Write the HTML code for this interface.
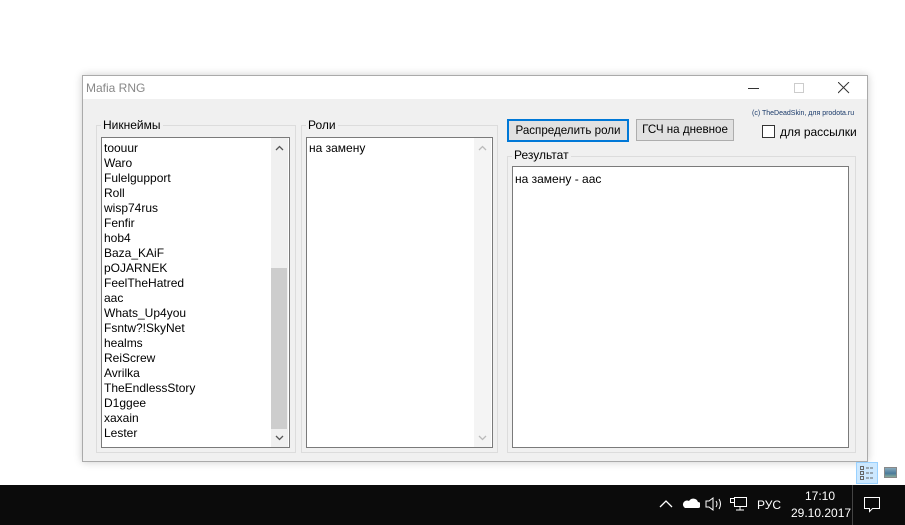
<!DOCTYPE html>
<html><head><meta charset="utf-8"><style>
*{margin:0;padding:0;box-sizing:border-box}
body{width:905px;height:525px;background:#fff;position:relative;overflow:hidden;font-family:"Liberation Sans","DejaVu Sans",sans-serif;font-size:12px;color:#000}
.a{position:absolute}
.win{left:82px;top:75px;width:786px;height:387px;background:#f0f0f0;border:1px solid #aaa;box-shadow:0 0 8px rgba(0,0,0,.2)}
.title{left:0;top:0;width:784px;height:23px;background:#fff}
.gb{border:1px solid #dcdcdc}
.lab{background:#f0f0f0;padding:0 2px;font-size:12px;line-height:13px}
.box{background:#fff;border:1px solid #7a7a7a}
.list div{height:15px;line-height:15px;padding-left:2px}
.btn{background:#e1e1e1;border:1px solid #adadad;text-align:center;line-height:19px;font-size:11.6px}
</style></head><body>
<div class="a win">
 <div class="a title"><span class="a" style="left:3px;top:5px;color:#888;font-size:12px">Mafia RNG</span>
  <div class="a" style="left:665px;top:12px;width:11px;height:1px;background:#333"></div>
  <div class="a" style="left:711px;top:7px;width:10px;height:10px;border:1px solid #ccc"></div>
  <svg class="a" style="left:755px;top:6px" width="12" height="12"><path d="M0 0L11 11M11 0L0 11" stroke="#333" stroke-width="1"/></svg>
 </div>
 <div class="a gb" style="left:13px;top:49px;width:200px;height:328px"></div>
 <div class="a lab" style="left:18px;top:43px">Никнеймы</div>
 <div class="a box list" style="left:18px;top:61px;width:189px;height:311px;padding-top:3px">
  <div>toouur</div><div>Waro</div><div>Fulelgupport</div><div>Roll</div><div>wisp74rus</div><div>Fenfir</div><div>hob4</div><div>Baza_KAiF</div><div>pOJARNEK</div><div>FeelTheHatred</div><div>aac</div><div>Whats_Up4you</div><div>Fsntw?!SkyNet</div><div>healms</div><div>ReiScrew</div><div>Avrilka</div><div>TheEndlessStory</div><div>D1ggee</div><div>xaxain</div><div>Lester</div>
  <div class="a" style="left:169px;top:0;width:17px;height:309px;background:#f0f0f0"></div>
  <div class="a" style="left:169px;top:130px;width:16px;height:161px;background:#cdcdcd"></div>
  <svg class="a" style="left:173px;top:7px" width="9" height="6"><path d="M1 5L4.5 1.5L8 5" stroke="#555" fill="none" stroke-width="1.3"/></svg>
  <svg class="a" style="left:173px;top:297px" width="9" height="6"><path d="M1 1L4.5 4.5L8 1" stroke="#555" fill="none" stroke-width="1.3"/></svg>
 </div>
 <div class="a gb" style="left:218px;top:49px;width:197px;height:328px"></div>
 <div class="a lab" style="left:223px;top:43px">Роли</div>
 <div class="a box list" style="left:223px;top:61px;width:187px;height:311px;padding-top:3px">
  <div>на замену</div>
  <div class="a" style="left:167px;top:0;width:17px;height:309px;background:#f4f4f4"></div>
  <svg class="a" style="left:171px;top:7px" width="9" height="6"><path d="M1 5L4.5 1.5L8 5" stroke="#bbb" fill="none" stroke-width="1.3"/></svg>
  <svg class="a" style="left:171px;top:297px" width="9" height="6"><path d="M1 1L4.5 4.5L8 1" stroke="#bbb" fill="none" stroke-width="1.3"/></svg>
 </div>
 <div class="a btn" style="left:424px;top:43px;width:122px;height:23px;border:2px solid #0078d7;line-height:19px">Распределить роли</div>
 <div class="a btn" style="left:553px;top:43px;width:98px;height:22px">ГСЧ на дневное</div>
 <div class="a" style="left:669px;top:34px;font-size:7px;color:#1a3a6a">(c) TheDeadSkin, для prodota.ru</div>
 <div class="a" style="left:679px;top:49px;width:13px;height:13px;border:1px solid #333;background:#fff"></div>
 <div class="a" style="left:697px;top:49px">для рассылки</div>
 <div class="a gb" style="left:424px;top:80px;width:349px;height:297px"></div>
 <div class="a lab" style="left:429px;top:73px">Результат</div>
 <div class="a box list" style="left:429px;top:90px;width:337px;height:282px;padding-top:5px"><div>на замену - аас</div></div>
</div>
<div class="a" style="left:856px;top:462px;width:22px;height:22px;background:#cce8ff;border:1px solid #99d1ff"></div>
<svg class="a" style="left:859px;top:465px" width="18" height="16"><g fill="none" stroke="#666"><rect x="1.5" y="1.5" width="3" height="3"/><rect x="1.5" y="6.5" width="3" height="3"/><rect x="1.5" y="11.5" width="3" height="3"/><path d="M7 3h3M11 3h3M7 8h3M11 8h3M7 13h3M11 13h3"/></g></svg>
<div class="a" style="left:884px;top:467px;width:13px;height:11px;border:1px solid #888;background:linear-gradient(#8ab 0,#4a7a9a 60%,#8a9 100%)"></div>
<div class="a" style="left:0;top:485px;width:905px;height:40px;background:#0b0b0b;color:#fff">
 <svg class="a" style="left:659px;top:14px" width="14" height="10"><path d="M1 8L7 2L13 8" stroke="#fff" fill="none" stroke-width="1.3"/></svg>
 <svg class="a" style="left:682px;top:12px" width="18" height="12"><path d="M3 11h13a3 3 0 0 0 0-6a5 5 0 0 0-9-1a4 4 0 0 0-4 7z" fill="#fff"/></svg>
 <svg class="a" style="left:705px;top:11px" width="18" height="16"><path d="M1 5h3l4-3v12l-4-3H1z" fill="none" stroke="#fff"/><path d="M11 5q2 3 0 6M14 3q3 5 0 10" stroke="#fff" fill="none"/></svg>
 <svg class="a" style="left:730px;top:11px" width="18" height="16"><rect x="4.5" y="1.5" width="12" height="9" fill="none" stroke="#fff"/><rect x="0.5" y="2.5" width="4" height="4" fill="#0b0b0b" stroke="#fff"/><path d="M10 11v3M6 14h8" stroke="#fff"/></svg>
 <div class="a" style="left:757px;top:13px;font-size:12px">РУС</div>
 <div class="a" style="left:805px;top:4px;font-size:12px">17:10</div>
 <div class="a" style="left:791px;top:21px;font-size:12px">29.10.2017</div>
 <div class="a" style="left:852px;top:0;width:1px;height:40px;background:#444"></div>
 <svg class="a" style="left:863px;top:11px" width="18" height="18"><path d="M1.5 1.5h15v11h-7l-3 3v-3h-5z" fill="none" stroke="#fff"/></svg>
</div>
</body></html>
